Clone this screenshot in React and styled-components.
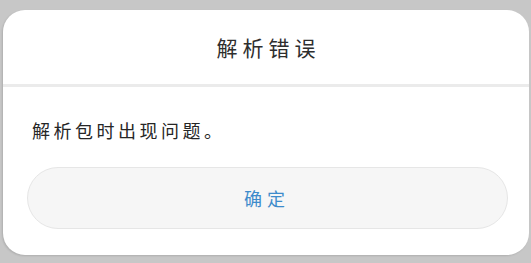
import React from "react";
import styled, { createGlobalStyle } from "styled-components";

const Global = createGlobalStyle`
  html, body { margin: 0; padding: 0; background: #c7c7c7; }
  body { font-family: "Noto Sans CJK SC", "Noto Sans", sans-serif; }
`;

const Page = styled.div`
  width: 531px;
  height: 263px;
  box-sizing: border-box;
  padding: 10px 2px 0 3px;
  overflow: hidden;
`;

const Dialog = styled.div`
  background: #ffffff;
  border-radius: 22px;
  display: flex;
  flex-direction: column;
  padding-bottom: 26px;
  box-shadow: -1px 1px 2px rgba(0, 0, 0, 0.12);
`;

const Header = styled.div`
  height: 74px;
  display: flex;
  align-items: center;
  justify-content: center;
`;

const Title = styled.h1`
  margin: 0;
  font-size: 21px;
  font-weight: 400;
  letter-spacing: 5px;
  padding-left: 5px;
  color: #2e2e2e;
`;

const Divider = styled.div`
  height: 3px;
  background: #ebebeb;
`;

const Message = styled.p`
  margin: 30px 0 24px;
  padding: 0 29px;
  font-size: 18px;
  line-height: 26px;
  letter-spacing: 3.5px;
  color: #262626;
`;

const ActionButton = styled.button`
  margin: 0 21px 0 24px;
  height: 62px;
  border-radius: 31px;
  border: 1px solid #e6e6e6;
  background: #f6f6f6;
  color: #3d8bcb;
  font-family: inherit;
  font-size: 18px;
  letter-spacing: 5px;
  padding-left: 5px;
  display: flex;
  align-items: center;
  justify-content: center;
`;

export default function App() {
  return (
    <>
      <Global />
      <Page>
        <Dialog>
          <Header>
            <Title>解析错误</Title>
          </Header>
          <Divider />
          <Message>解析包时出现问题。</Message>
          <ActionButton>确定</ActionButton>
        </Dialog>
      </Page>
    </>
  );
}
